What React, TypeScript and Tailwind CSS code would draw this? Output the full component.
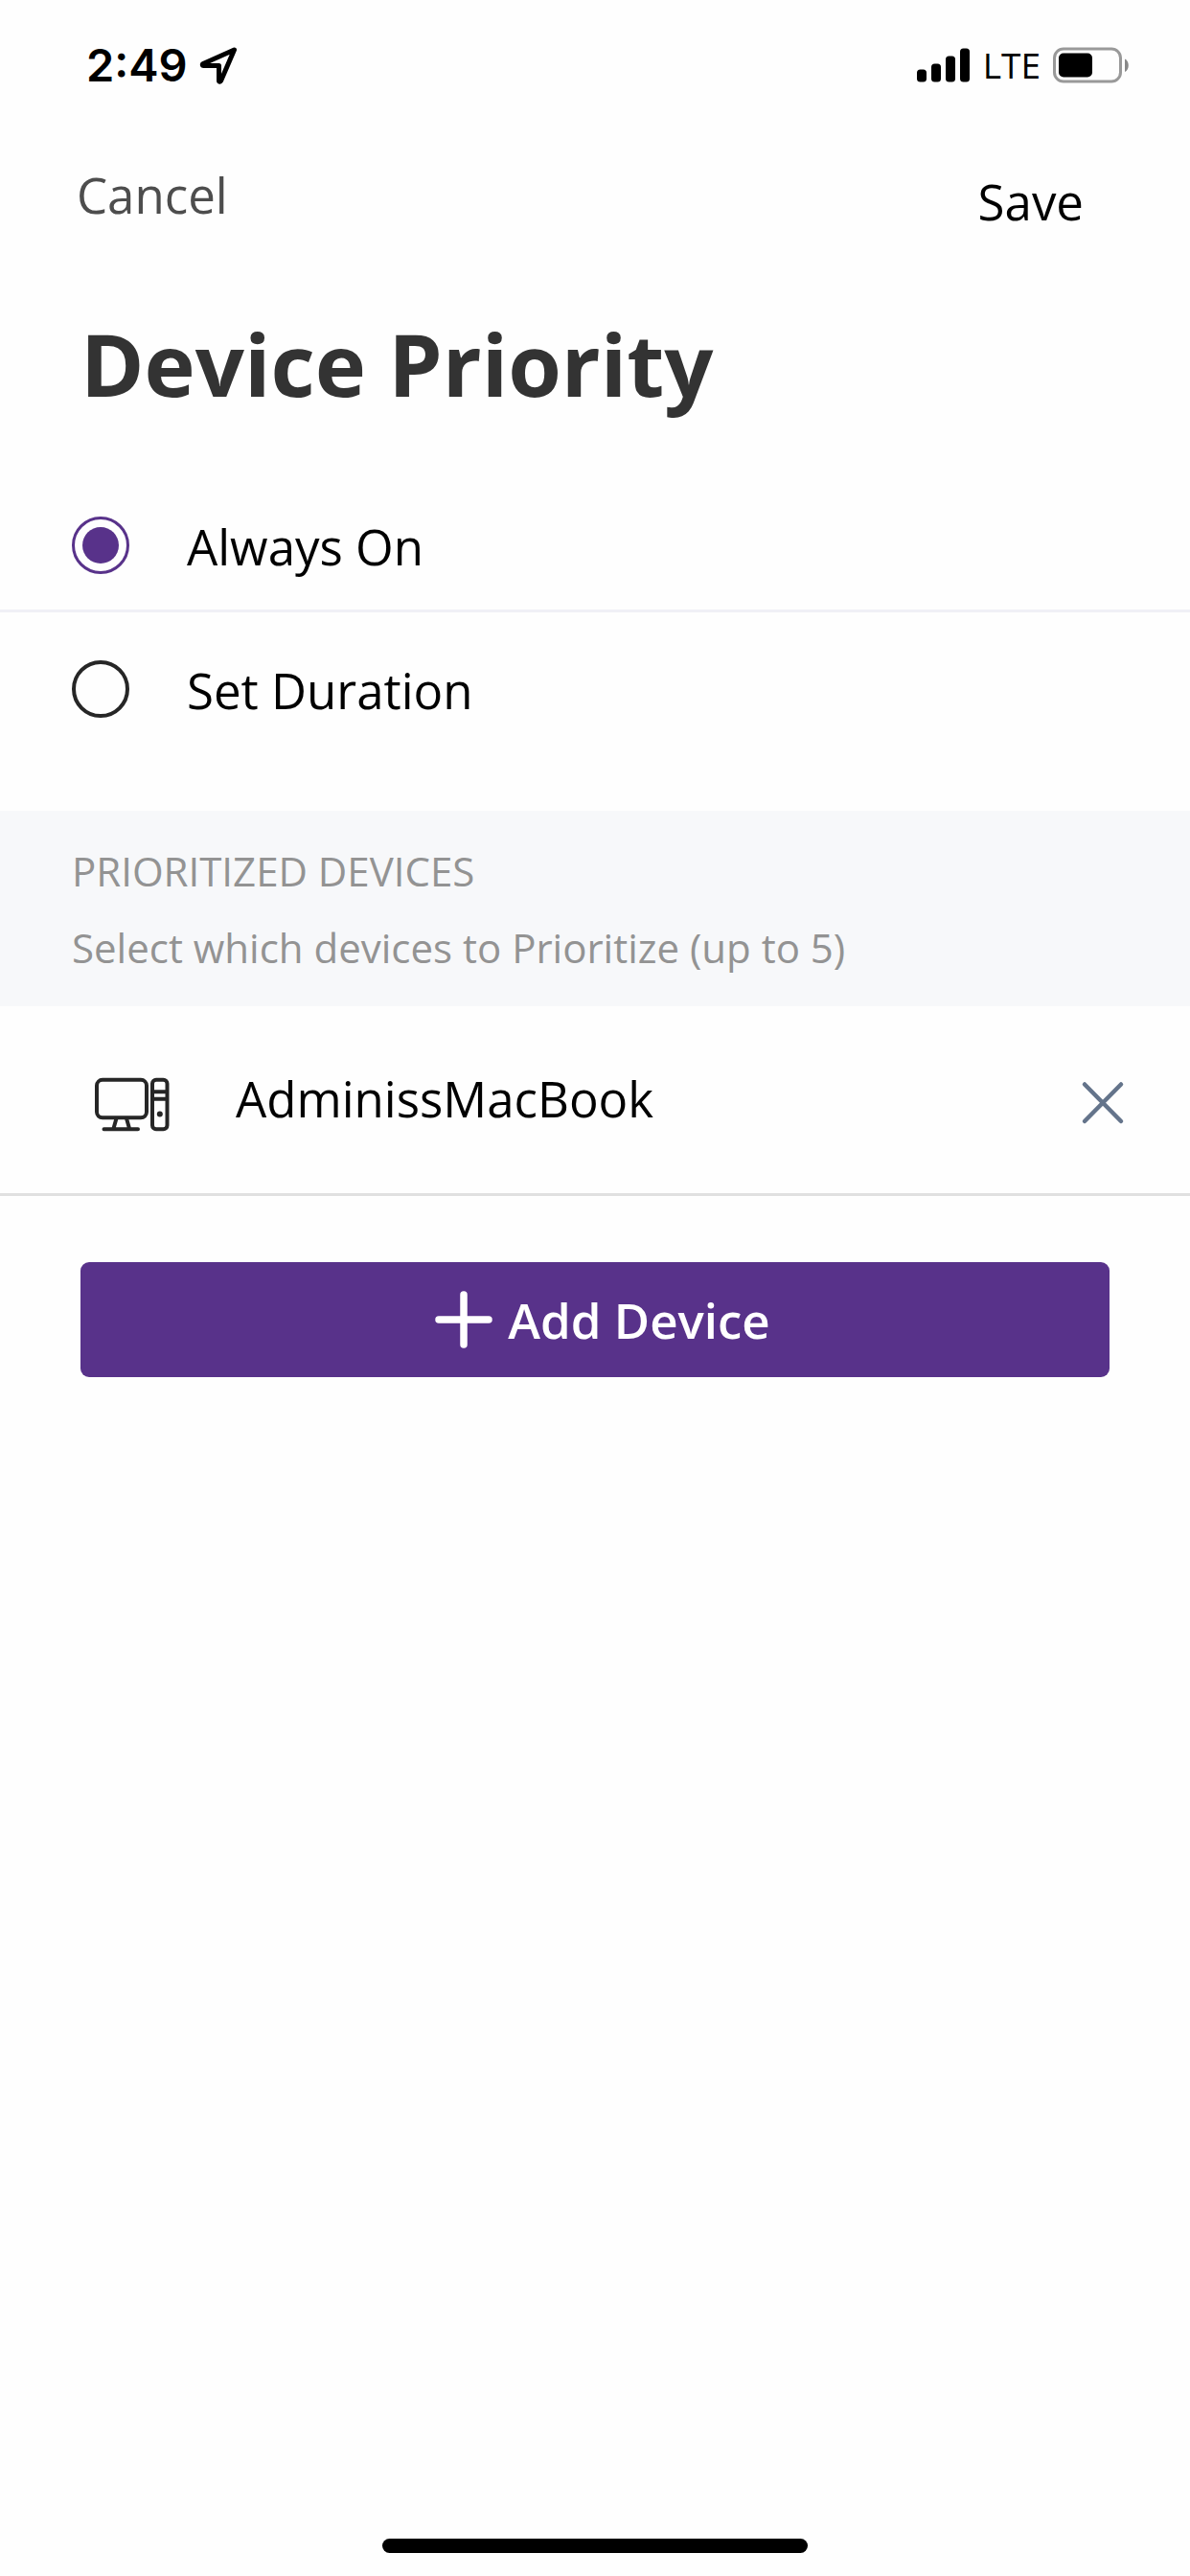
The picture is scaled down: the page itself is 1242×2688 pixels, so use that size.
import { useState } from "react";

function StatusBar() {
  return (
    <div className="flex h-[136px] items-center justify-between pr-[63px] pl-[90px] font-['Inter',sans-serif]">
      <div className="flex items-center gap-3">
        <span className="text-[47px] leading-[60px] font-semibold">2:49</span>
        <svg className="h-10 w-10" viewBox="0 0 40 40" fill="none" stroke="currentColor" strokeWidth="5" strokeLinejoin="round" aria-label="Location in use">
          <path d="M36.500 4 4 18.500C3 19 3 20.500 4.500 20.500H20.500V36C20.500 37.500 22 37.500 22.500 36.500Z" />
        </svg>
      </div>
      <div className="flex items-center gap-[13px]">
        <svg className="h-9 w-14" viewBox="0 0 56 36" aria-label="Signal strength">
          <rect x="0" y="22.500" width="10" height="13" rx="3.500" />
          <rect x="15" y="16.500" width="10" height="19" rx="3.500" />
          <rect x="30" y="8.500" width="10" height="27" rx="3.500" />
          <rect x="45" y="0.500" width="10" height="35" rx="3.500" />
        </svg>
        <span className="font-['Open_Sans',sans-serif] text-[37px] leading-[60px] font-medium">LTE</span>
        <svg className="h-[38px] w-20" viewBox="0 0 80 38" aria-label="Battery">
          <rect x="1.500" y="2" width="69" height="34" rx="9.500" fill="none" stroke="#999" strokeWidth="3" />
          <rect x="6" y="6.500" width="35" height="25" rx="5" />
          <path d="M75 12.500c5 2 5 11.500 0 13.500Z" fill="#888" />
        </svg>
      </div>
    </div>
  );
}

function ComputerIcon() {
  return (
    <svg className="h-[72px] w-[78px]" viewBox="0 0 78 72" fill="none" stroke="#262626" strokeWidth="4" strokeLinecap="round" aria-hidden="true">
      <rect x="2" y="10.800" width="52" height="39.500" rx="6" />
      <path d="M22.500 51 19.500 61.500M33 51 36 61.500M9.500 62.300H45" />
      <rect x="60" y="10.800" width="15.500" height="51.500" rx="4" />
      <path d="M60 23.300H75.500M60 30.700H75.500" strokeLinecap="butt" />
      <circle cx="67.800" cy="46.500" r="3" fill="#262626" stroke="none" />
    </svg>
  );
}

const options = ["Always On", "Set Duration"];

export default function App() {
  const [mode, setMode] = useState("Always On");
  const [devices, setDevices] = useState(["AdminissMacBook"]);

  return (
    <div className="flex min-h-screen flex-col bg-[#fefefe] font-['Open_Sans',sans-serif] text-[51px] text-black">
      <StatusBar />
      <nav className="flex min-h-[105px] justify-between pt-9 pr-[111px] pl-20">
        <button type="button" className="self-start leading-[62px] text-[#4d4d4d]">Cancel</button>
        <button type="button" className="self-end leading-[62px]">Save</button>
      </nav>
      <main className="grow">
        <h1 className="px-[84px] pt-[88px] pb-[60px] text-[90px] leading-[100px] font-bold text-[#333]">
          Device Priority
        </h1>
        <fieldset className="pb-[60px]" aria-label="Priority duration">
          {options.map((name) => (
            <label key={name} className="flex items-start gap-[60px] border-b-3 border-[#f0f0f6] px-[75px] pt-[50px] pb-[35px] leading-[62px] last:border-b-0">
              <input
                type="radio"
                name="mode"
                checked={mode === name}
                onChange={() => setMode(name)}
                className="grid size-[60px] shrink-0 appearance-none place-items-center rounded-full border-4 border-[#262626] checked:border-3 checked:border-[#58328a] checked:before:size-[38px] checked:before:rounded-full checked:before:bg-[#58328a] checked:before:content-['']"
              />
              {name}
            </label>
          ))}
        </fieldset>
        <section>
          <header className="flex flex-col gap-[30px] bg-[#f7f8fa] px-[75px] pt-[38px] pb-9 text-[42px] leading-[50px] text-[#939393]">
            <h2>PRIORITIZED DEVICES</h2>
            <p>Select which devices to Prioritize (up to 5)</p>
          </header>
          <ul>
            {devices.map((device) => (
              <li key={device} className="flex items-start border-b-3 border-[#e0e0e0] pt-[66px] pr-[55px] pb-[57px] pl-[99px]">
                <ComputerIcon />
                <span className="grow pl-[69px] leading-[60px]">{device}</span>
                <button type="button" aria-label={`Remove ${device}`} onClick={() => setDevices(devices.filter((d) => d !== device))}>
                  <svg className="size-[72px]" viewBox="0 0 72 72" fill="none" stroke="#64748b" strokeWidth="4.500" strokeLinecap="round">
                    <path d="M17 15.500 55 54M55 15.500 17 54" />
                  </svg>
                </button>
              </li>
            ))}
          </ul>
          <div className="px-[84px] pt-[69px]">
            <button type="button" className="flex h-[120px] w-full items-center justify-center gap-4 rounded-[9px] bg-[#58328a] pl-4 font-semibold text-white">
              <svg className="size-[60px]" viewBox="0 0 60 60" fill="none" stroke="currentColor" strokeWidth="7.500" strokeLinecap="round" aria-hidden="true">
                <path d="M30 4V56M4 30H56" />
              </svg>
              <span className="leading-[60px]">Add Device</span>
            </button>
          </div>
        </section>
      </main>
      <div className="mb-6 h-[15px] w-[444px] self-center rounded-full bg-black" />
    </div>
  );
}
